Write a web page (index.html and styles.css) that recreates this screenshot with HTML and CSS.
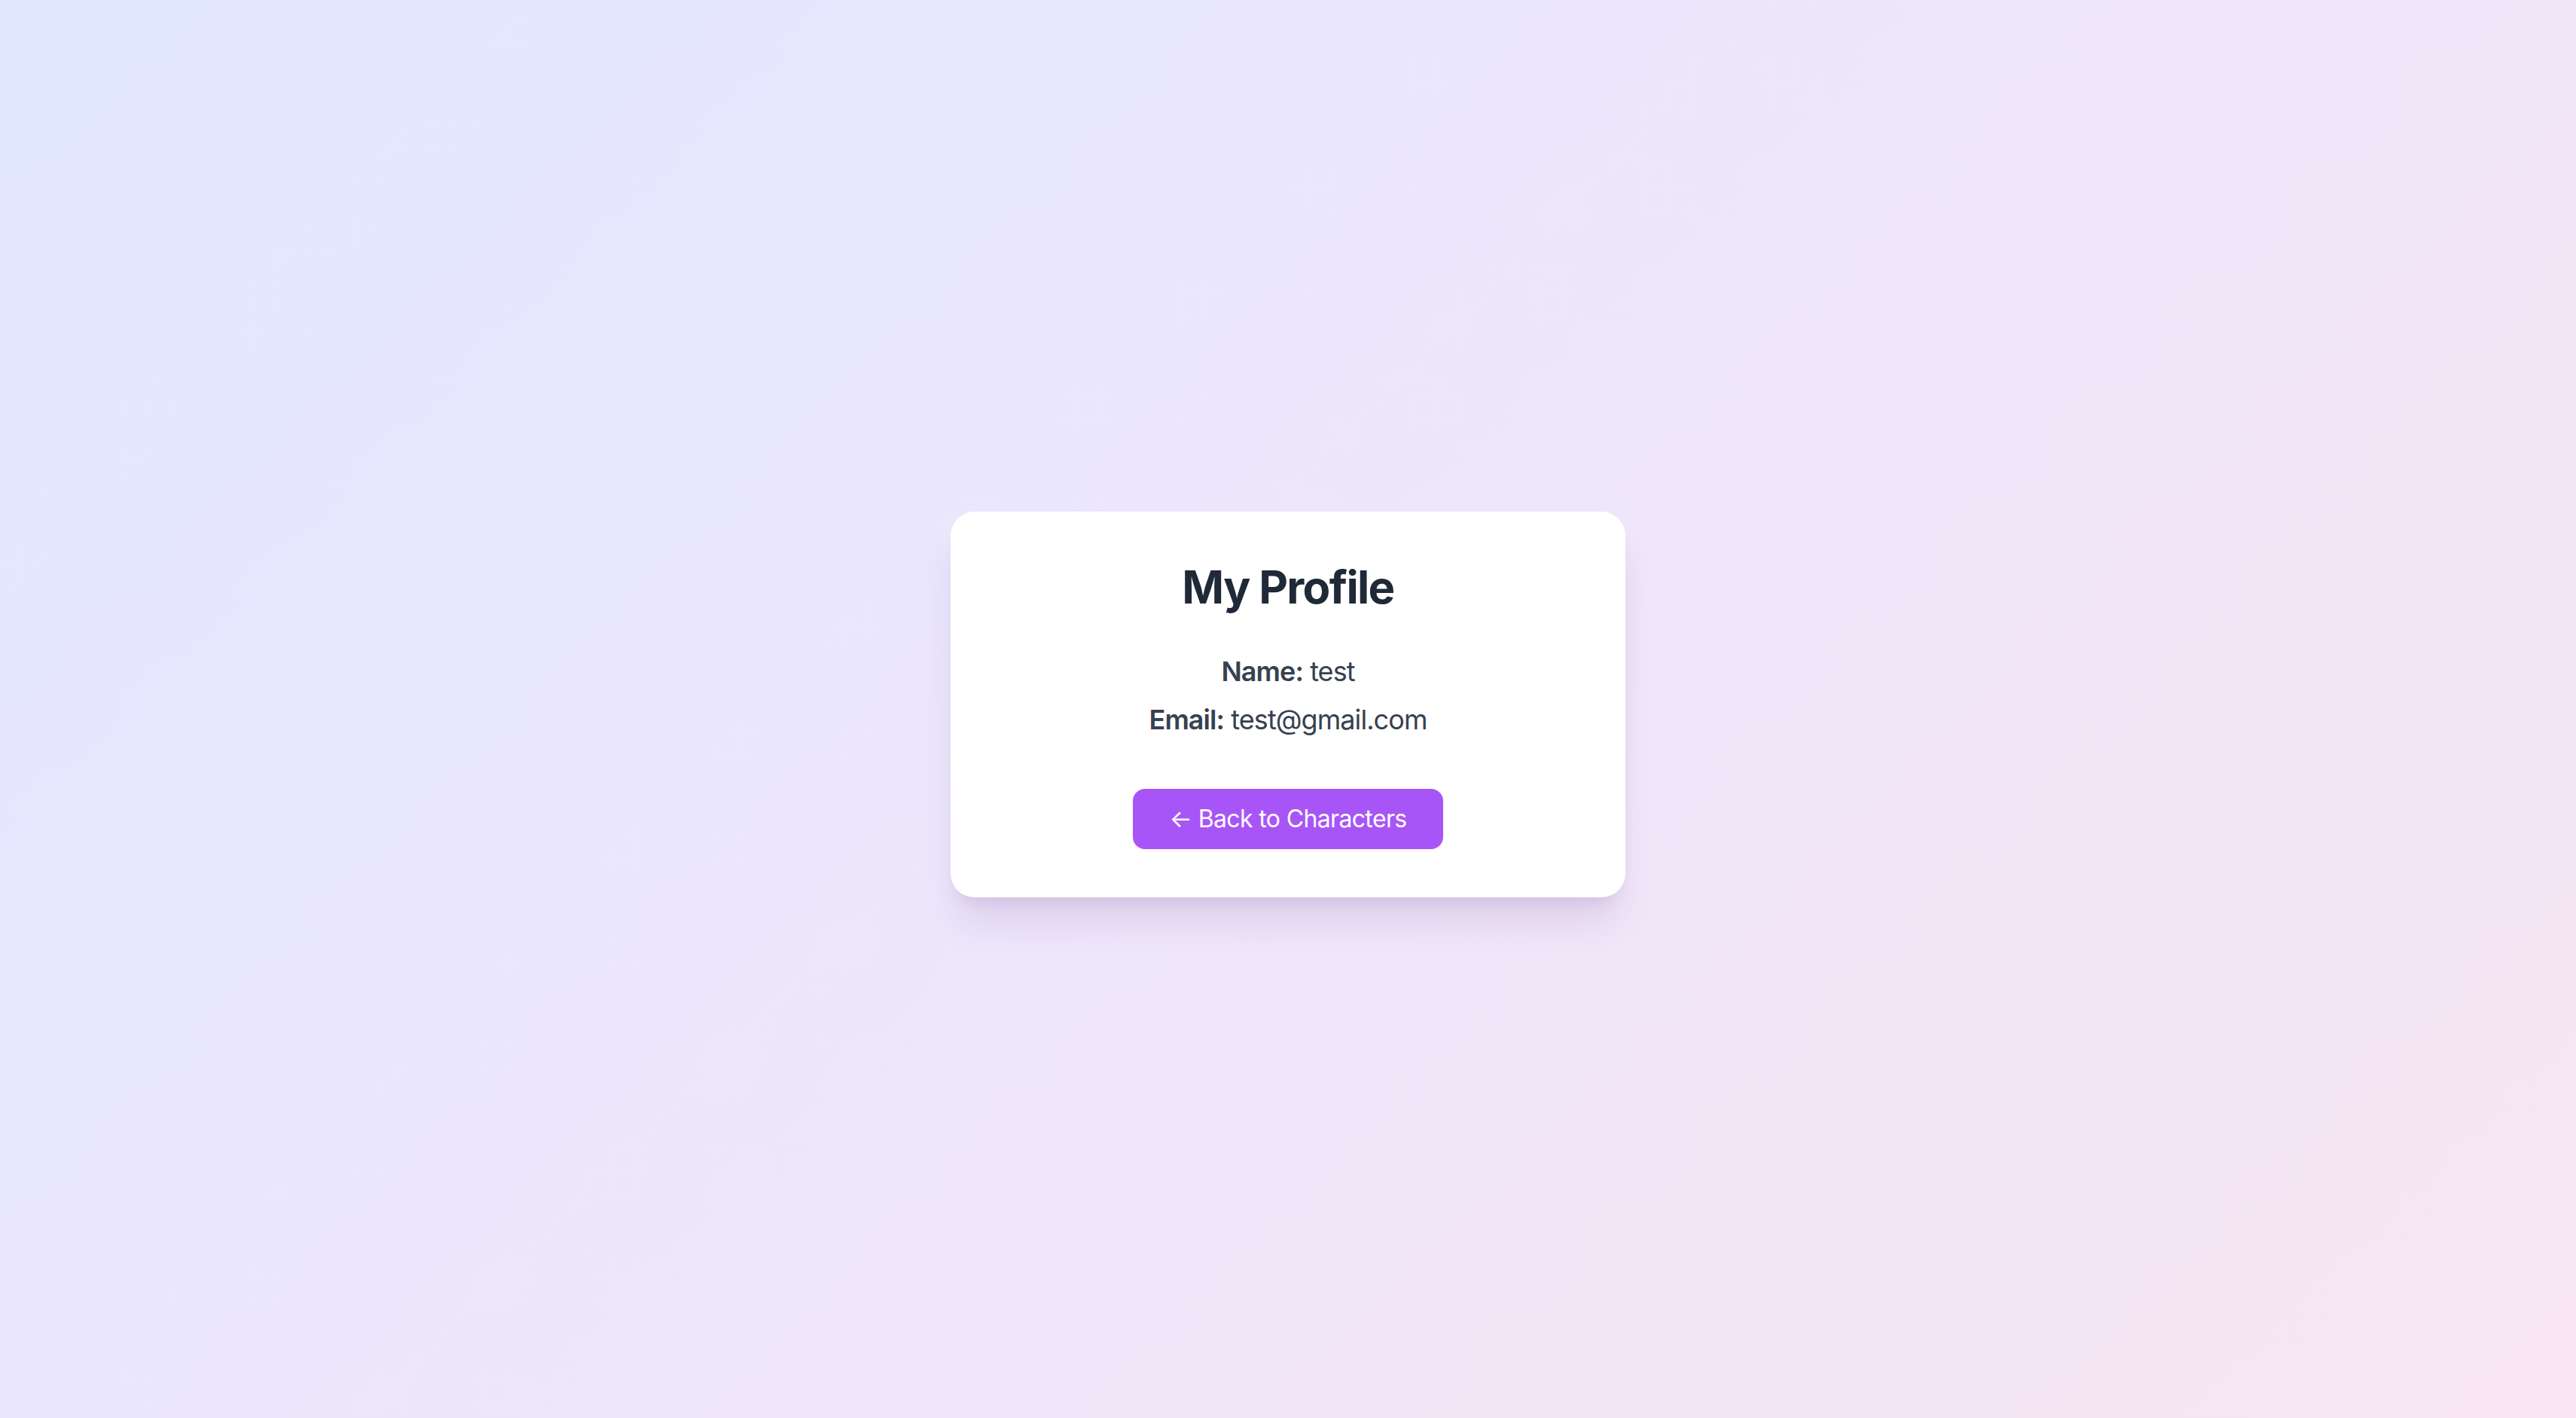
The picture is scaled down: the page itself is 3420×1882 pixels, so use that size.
FILE: index.html
```html
<!DOCTYPE html>
<html lang="en">
<head>
<meta charset="utf-8">
<title>My Profile</title>
<link rel="stylesheet" href="styles.css">
</head>
<body>
<main class="page">
  <section class="card">
    <h1 class="title">My Profile</h1>
    <div class="info">
      <p class="row"><strong>Name:</strong> test</p>
      <p class="row"><strong>Email:</strong> test@gmail.com</p>
    </div>
    <a class="btn" href="#">← Back to Characters</a>
  </section>
</main>
</body>
</html>
```
FILE: styles.css
```css
* { box-sizing: border-box; }
html, body { margin: 0; padding: 0; }
body {
  font-family: Inter, "Noto Sans", "Liberation Sans", sans-serif;
  background: linear-gradient(135deg, #e0e7ff 0%, #eee6fb 50%, #f8e6f2 100%);
  min-height: 100vh;
}
.page {
  min-height: 100vh;
  display: flex;
  align-items: center;
  justify-content: center;
  padding-bottom: 12px;
}
.card {
  width: 896px;
  background: #fff;
  border-radius: 32px;
  padding: 64px;
  text-align: center;
  box-shadow: 0 40px 50px -10px rgba(80, 40, 120, 0.12), 0 16px 20px -12px rgba(80, 40, 120, 0.1);
}
.title {
  margin: 0 0 48px;
  font-size: 60px;
  line-height: 72px;
  font-weight: 700;
  letter-spacing: -0.028em;
  color: #1f2937;
}
.info { display: flex; flex-direction: column; gap: 8px; }
.row {
  margin: 0;
  font-size: 36px;
  line-height: 56px;
  letter-spacing: -0.026em;
  color: #374151;
}
.row strong { font-weight: 600; }
.btn {
  display: inline-block;
  margin-top: 64px;
  padding: 16px 48px;
  background: #a855f7;
  color: #fff;
  font-size: 32px;
  line-height: 48px;
  letter-spacing: -0.02em;
  border-radius: 16px;
  text-decoration: none;
}
```
